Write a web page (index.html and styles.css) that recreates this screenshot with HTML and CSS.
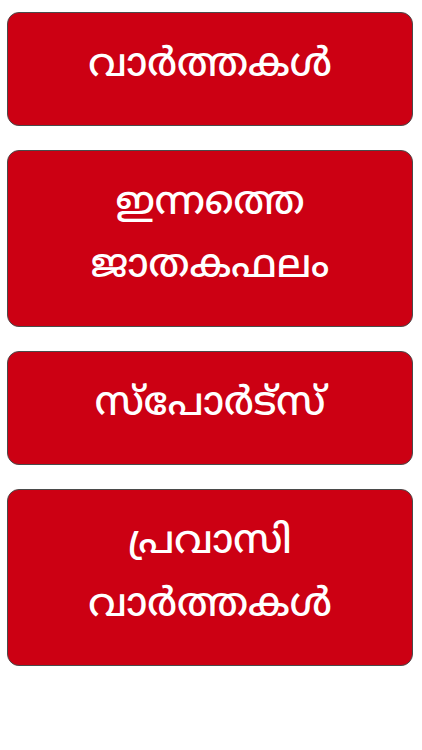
FILE: index.html
```html
<!DOCTYPE html>
<html lang="ml">
<head>
<meta charset="utf-8">
<link rel="stylesheet" href="styles.css">
</head>
<body>
<div class="menu">
  <a class="btn">വാർത്തകൾ</a>
  <a class="btn">ഇന്നത്തെ<br>ജാതകഫലം</a>
  <a class="btn">സ്പോർട്സ്</a>
  <a class="btn">പ്രവാസി<br>വാർത്തകൾ</a>
</div>
</body>
</html>
```
FILE: styles.css
```css
html, body {
  margin: 0;
  padding: 0;
  background: #ffffff;
}
.menu {
  display: flex;
  flex-direction: column;
  gap: 24px;
  padding: 12px 9px 0 7px;
}
.btn {
  display: block;
  background: #cc0013;
  border: 1px solid #4a4a4a;
  border-radius: 12px;
  color: #ffffff;
  text-align: center;
  font-family: "Noto Sans Malayalam", "Noto Sans", "DejaVu Sans", sans-serif;
  font-size: 39px;
  font-weight: 500;
  line-height: 63px;
  padding: 22px 0 27px;
  text-decoration: none;
}
```
